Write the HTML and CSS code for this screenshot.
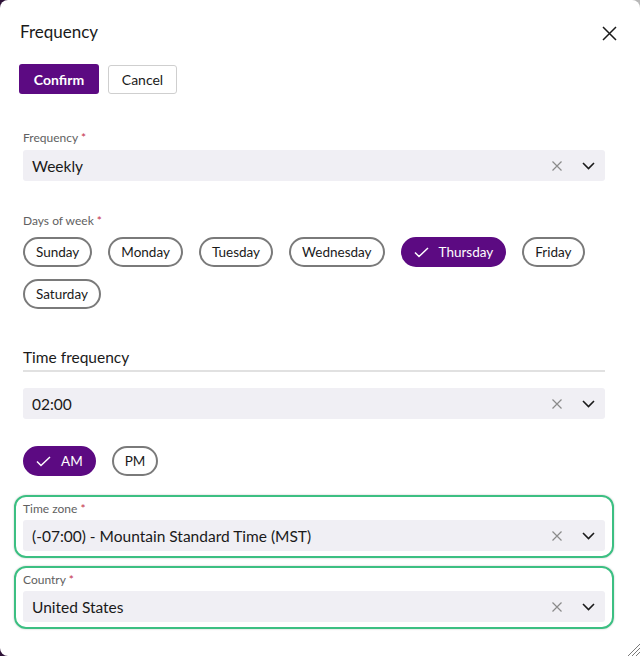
FILE: index.html
```html
<!DOCTYPE html>
<html>
	<head>
		<meta charset="UTF-8">
		<title>Frequency</title>
		<link rel="stylesheet" href="styles.css">
	</head>
	<body>
		<div class="dialog">
			<div class="head">
				<h1 class="title">Frequency</h1>
				<button class="close" aria-label="Close">
					<svg width="15" height="15" viewBox="0 0 15 15"><path d="M1 1L14 14M14 1L1 14" stroke="#1a1a1a" stroke-width="1.5" fill="none"/></svg>
				</button>
			</div>
			<div class="actions">
				<button class="btn btn_primary">Confirm</button>
				<button class="btn">Cancel</button>
			</div>

			<div class="form">
				<div class="field">
					<div class="label">Frequency <span class="req">*</span></div>
					<div class="select">
						<span class="value">Weekly</span>
						<span class="icons">
							<svg width="10" height="10" viewBox="0 0 10 10"><path d="M0.5 0.5L9.5 9.5M9.5 0.5L0.5 9.5" stroke="#8a8a8a" stroke-width="1.2" fill="none"/></svg>
							<svg width="13" height="8" viewBox="0 0 13 8"><path d="M1 1L6.5 6.5L12 1" stroke="#1a1a1a" stroke-width="1.6" fill="none"/></svg>
						</span>
					</div>
				</div>

				<div class="field days">
					<div class="label">Days of week <span class="req">*</span></div>
					<div class="pills">
						<span class="pill">Sunday</span>
						<span class="pill">Monday</span>
						<span class="pill">Tuesday</span>
						<span class="pill">Wednesday</span>
						<span class="pill pill_on">
							<svg width="15" height="11" viewBox="0 0 15 11"><path d="M1 5.5L5 9.5L14 1" stroke="#fff" stroke-width="1.5" fill="none"/></svg>
							Thursday
						</span>
						<span class="pill">Friday</span>
						<span class="pill">Saturday</span>
					</div>
				</div>

				<h2 class="section">Time frequency</h2>

				<div class="select time">
					<span class="value">02:00</span>
					<span class="icons">
						<svg width="10" height="10" viewBox="0 0 10 10"><path d="M0.5 0.5L9.5 9.5M9.5 0.5L0.5 9.5" stroke="#8a8a8a" stroke-width="1.2" fill="none"/></svg>
						<svg width="13" height="8" viewBox="0 0 13 8"><path d="M1 1L6.5 6.5L12 1" stroke="#1a1a1a" stroke-width="1.6" fill="none"/></svg>
					</span>
				</div>

				<div class="pills ampm">
					<span class="pill pill_on">
						<svg width="15" height="11" viewBox="0 0 15 11"><path d="M1 5.5L5 9.5L14 1" stroke="#fff" stroke-width="1.5" fill="none"/></svg>
						AM
					</span>
					<span class="pill">PM</span>
				</div>

				<div class="field hl first">
					<div class="label">Time zone <span class="req">*</span></div>
					<div class="select">
						<span class="value">(-07:00) - Mountain Standard Time (MST)</span>
						<span class="icons">
							<svg width="10" height="10" viewBox="0 0 10 10"><path d="M0.5 0.5L9.5 9.5M9.5 0.5L0.5 9.5" stroke="#8a8a8a" stroke-width="1.2" fill="none"/></svg>
							<svg width="13" height="8" viewBox="0 0 13 8"><path d="M1 1L6.5 6.5L12 1" stroke="#1a1a1a" stroke-width="1.6" fill="none"/></svg>
						</span>
					</div>
				</div>

				<div class="field hl">
					<div class="label">Country <span class="req">*</span></div>
					<div class="select">
						<span class="value">United States</span>
						<span class="icons">
							<svg width="10" height="10" viewBox="0 0 10 10"><path d="M0.5 0.5L9.5 9.5M9.5 0.5L0.5 9.5" stroke="#8a8a8a" stroke-width="1.2" fill="none"/></svg>
							<svg width="13" height="8" viewBox="0 0 13 8"><path d="M1 1L6.5 6.5L12 1" stroke="#1a1a1a" stroke-width="1.6" fill="none"/></svg>
						</span>
					</div>
				</div>
			</div>

			<svg class="grip" width="13" height="12" viewBox="0 0 13 12">
				<path d="M1 12L13 0M5 12L13 4M9 12L13 8" stroke="#7a7a7a" stroke-width="1" fill="none"/>
			</svg>
		</div>
	</body>
</html>
```

FILE: styles.css
```css
* {
	margin: 0;
	padding: 0;
	box-sizing: border-box;
}
html {
	background: linear-gradient(90deg, #2e1238 0%, #555 50%, #b8b8b8 100%);
}
body {
	font-family: Lato, "Noto Sans", sans-serif;
	color: #1a1a1a;
}
button {
	font-family: inherit;
	background: none;
	border: none;
	cursor: pointer;
}
.dialog {
	position: relative;
	min-height: 656px;
	background: #fff;
	border-radius: 8px 8px 0 8px;
	padding-top: 20px;
}
.head {
	display: flex;
	justify-content: space-between;
	align-items: center;
	padding: 0 23px 0 20px;
	height: 24px;
}
.title {
	font-size: 17px;
	font-weight: 400;
	line-height: 24px;
}
.close {
	width: 15px;
	height: 15px;
	display: flex;
	margin-top: 3px;
}
.actions {
	display: flex;
	align-items: center;
	gap: 9px;
	padding-left: 19px;
	margin-top: 20px;
}
.btn {
	height: 29px;
	width: 69px;
	font-size: 14px;
	color: #1a1a1a;
	border: 1px solid #cfcfcf;
	border-radius: 3px;
	background: #fff;
}
.btn_primary {
	height: 30px;
	width: 80px;
	border: none;
	background: #5c0a82;
	color: #fff;
	font-weight: 700;
}
.form {
	padding: 0 35px 0 23px;
	margin-top: 36px;
}
.label {
	font-size: 12px;
	line-height: 16px;
	color: #616161;
	margin-bottom: 4px;
}
.req {
	color: #c4314b;
}
.select {
	display: flex;
	align-items: center;
	justify-content: space-between;
	height: 31px;
	padding: 0 10px 0 9px;
	background: #f0eff4;
	border-radius: 3px;
}
.value {
	font-size: 15.5px;
	color: #1a1a1a;
}
.icons {
	display: flex;
	align-items: center;
	gap: 20px;
}
.days {
	margin-top: 32px;
}
.days .label {
	margin-bottom: 8px;
}
.pills {
	display: flex;
	flex-wrap: wrap;
	gap: 12px 16px;
}
.pill {
	display: inline-flex;
	align-items: center;
	gap: 10px;
	height: 30px;
	padding: 0 11px;
	border: 2px solid #7a7a7a;
	border-radius: 16px;
	font-size: 13.5px;
	color: #1a1a1a;
}
.pill_on {
	background: #5c0a82;
	border-color: #5c0a82;
	color: #fff;
}
.section {
	margin-top: 37px;
	font-size: 15.5px;
	font-weight: 400;
	line-height: 22px;
	padding-bottom: 2px;
	border-bottom: 2px solid #e1e1e1;
}
.time {
	margin-top: 16px;
}
.ampm {
	margin-top: 27px;
}
.hl {
	margin: 0 -9px;
	padding: 4px 7px 5px;
	border: 2px solid #3cbf82;
	border-radius: 12px;
	box-shadow: 0 0 2px rgba(0, 0, 0, 0.25);
}
.hl .label {
	margin-bottom: 3px;
}
.hl.first {
	margin-top: 19px;
	margin-bottom: 8px;
}
.grip {
	position: absolute;
	right: 0;
	bottom: 0;
}
```
